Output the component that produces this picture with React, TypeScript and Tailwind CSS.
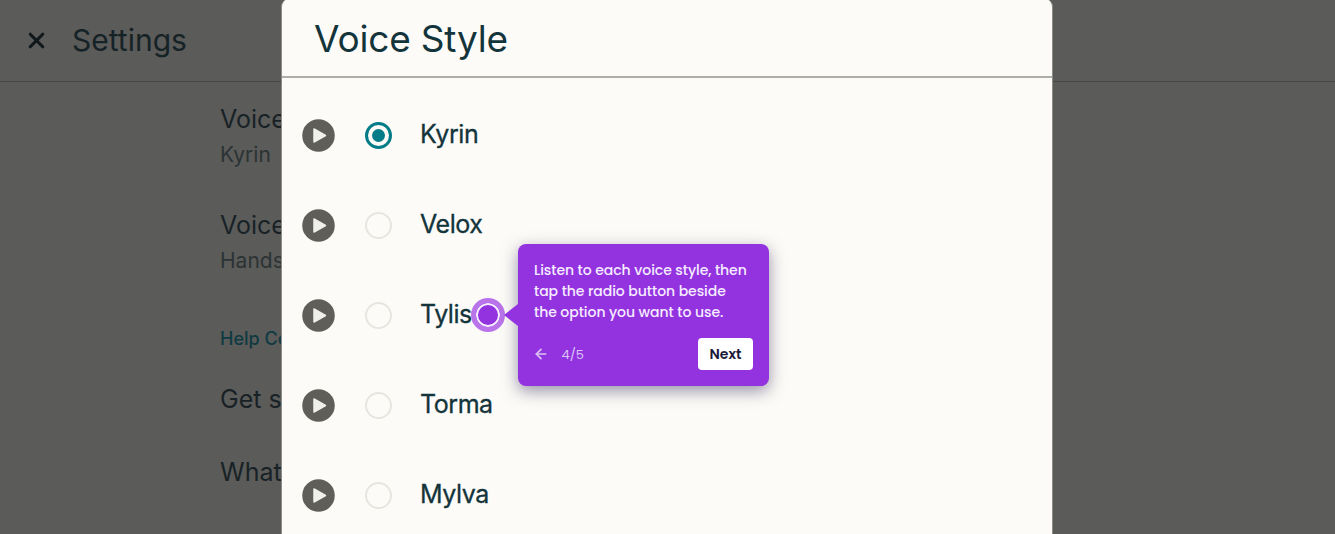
import { X, ArrowLeft } from "lucide-react";

const VOICES = ["Kyrin", "Velox", "Tylis", "Torma", "Mylva"];

function PlayButton() {
  return (
    <svg width="33" height="33" viewBox="0 0 33 33" className="shrink-0">
      <circle cx="16.5" cy="16.5" r="16.25" fill="#5f5e58" />
      <path d="M12 10 L23.5 16.5 L12 23 Z" fill="#eff0ea" stroke="#eff0ea" strokeWidth="1.5" strokeLinejoin="round" />
    </svg>
  );
}

function VoiceRow({ name, index }: { name: string; index: number }) {
  const selected = index === 0;
  return (
    <div className="flex h-[90px] items-center pl-5">
      <PlayButton />
      {selected ? (
        <span className="ml-[30px] flex h-[27px] w-[27px] items-center justify-center rounded-full border-[3px] border-[#037c88]">
          <span className="h-[13px] w-[13px] rounded-full bg-[#037c88]" />
        </span>
      ) : (
        <span className="ml-[30px] h-[27px] w-[27px] rounded-full border-2 border-[#e6e6e1]" />
      )}
      <span className="ml-7 pb-[2px] text-[25px] leading-8 font-normal tracking-[-0.45px] text-[#13343b] [-webkit-text-stroke:0.3px_#13343b]">{name}</span>
    </div>
  );
}

function Tooltip() {
  return (
    <div className="absolute top-[244px] left-[518px] h-[142px] w-[251px] rounded-lg bg-[#9333e0] px-4 pt-[16px] font-['Poppins','Open_Sans',sans-serif] shadow-[0_5px_16px_rgba(50,40,90,0.5)]">
      <span className="absolute top-[60px] -left-[14px] h-0 w-0 border-y-[11px] border-r-[14px] border-y-transparent border-r-[#9333e0]" />
      <p className="w-[218px] text-sm leading-[21px] font-medium tracking-[-0.05px] text-[#f6ecff]">
        Listen to each voice style, then tap the radio button beside the option you want to use.
      </p>
      <div className="mt-[15px] flex items-center">
        <ArrowLeft size={16} strokeWidth={2.5} className="-ml-[1.5px] text-[#dcc3f5]" />
        <span className="ml-[13px] pt-px text-[13px] text-[#dcc3f5]">4/5</span>
        <button className="ml-auto h-8 w-[55px] rounded bg-white text-sm font-semibold text-[#1c1a3a]">Next</button>
      </div>
    </div>
  );
}

function SettingsBehind() {
  return (
    <div className="h-[534px] w-[1335px] overflow-hidden bg-[#5b5b59] font-['Inter',sans-serif] text-[#182226]">
      <div className="flex h-[82px] items-center border-b border-[#474745] pl-6">
        <X size={25} strokeWidth={3} className="text-[#10181b]" />
        <span className="ml-[23px] pb-px text-[30px] font-normal text-[#152226]">Settings</span>
      </div>
      <div className="pt-[21px] pl-[220px]">
        <p className="text-[25px] leading-8">Voice</p>
        <p className="mt-1 text-[21px] leading-8 text-[#2b3335]">Kyrin</p>
        <p className="mt-[38px] text-[25px] leading-8">Voice</p>
        <p className="mt-1 text-[21px] leading-8 text-[#2b3335]">Hands-free</p>
        <p className="mt-[46px] text-lg leading-8 font-medium text-[#0f3a42]">Help Center</p>
        <p className="mt-7 text-[25px] leading-8">Get started</p>
        <p className="mt-[41px] text-[25px] leading-8">What's new</p>
      </div>
    </div>
  );
}

export default function App() {
  return (
    <div className="relative h-[534px] w-[1335px] overflow-hidden">
      <SettingsBehind />

      <div className="absolute top-[-1px] left-[281px] h-[560px] w-[772px] rounded-t-lg border-x border-[#8b8b87] bg-[#fcfbf7] font-['Inter',sans-serif]">
        <div className="flex h-[79px] items-center border-b-2 border-[#aeaea8] pt-[3px] pl-8">
          <h2 className="text-[37px] font-normal tracking-[-0.2px] text-[#13343b]">Voice Style</h2>
        </div>
        <div className="pt-3">
          {VOICES.map((name, i) => (
            <VoiceRow key={name} name={name} index={i} />
          ))}
        </div>
      </div>

      {/* tour highlight on the third radio row */}
      <span className="absolute top-[298px] left-[471px] h-[34px] w-[34px] rounded-full border-[5px] border-[#b874e8] bg-[#9333e0] shadow-[inset_0_0_0_2px_#f6ecff]" />
      <Tooltip />
    </div>
  );
}
